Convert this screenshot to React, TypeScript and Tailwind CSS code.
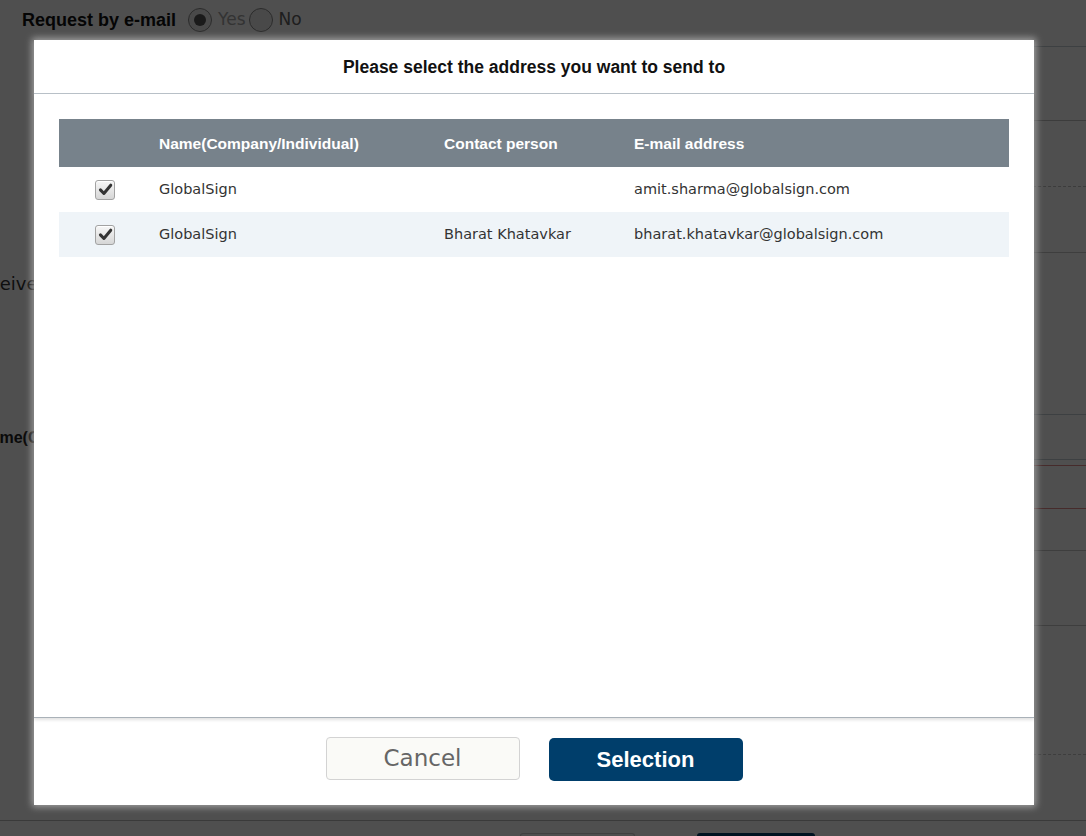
import React from 'react';

type Contact = {
  name: string;
  person: string;
  email: string;
};

const contacts: Contact[] = [
  { name: 'GlobalSign', person: '', email: 'amit.sharma@globalsign.com' },
  { name: 'GlobalSign', person: 'Bharat Khatavkar', email: 'bharat.khatavkar@globalsign.com' },
];

const CheckBox: React.FC = () => (
  <span className="flex h-[20px] w-[20px] items-center justify-center rounded-[3px] border border-[#a2a2a2] bg-gradient-to-b from-[#f7f7f7] to-[#d6d6d6] shadow-[inset_0_1px_0_#fff]">
    <svg viewBox="0 0 16 16" className="h-[15px] w-[15px]">
      <path d="M2.6 8.4 L6.3 12.3 L13.6 3.4" fill="none" stroke="#333" strokeWidth="3.2" strokeLinecap="round" strokeLinejoin="round" />
    </svg>
  </span>
);

const Radio: React.FC<{ checked?: boolean }> = ({ checked }) => (
  <span className="flex h-[24px] w-[24px] items-center justify-center rounded-full border border-[#8a8a8a] bg-[#ececec]">
    {checked && <span className="h-[12px] w-[12px] rounded-full bg-[#555]" />}
  </span>
);

const App: React.FC = () => {
  return (
    <div className="relative h-[836px] w-full overflow-hidden bg-white font-['DejaVu_Sans',sans-serif]">
      {/* page behind the dialog */}
      <div className="flex h-[40px] items-center pl-[22px]">
        <span className="font-['Liberation_Sans',sans-serif] text-[18px] font-bold text-[#111]">Request by e-mail</span>
        <div className="ml-[12px] flex items-center gap-[6px]">
          <Radio checked />
          <span className="text-[17px] text-[#a5a5a5]">Yes</span>
        </div>
        <div className="ml-[3px] flex items-center gap-[6px]">
          <Radio />
          <span className="text-[17px] text-[#636363]">No</span>
        </div>
      </div>

      <div className="flex h-[780px]">
        <div className="w-[300px] overflow-hidden">
          <div className="mt-[230px] -ml-[33px] whitespace-nowrap text-[18px] text-[#333]">Receive the certificate</div>
          <div className="mt-[129px] -ml-[21px] whitespace-nowrap font-['Liberation_Sans',sans-serif] text-[16px] font-bold text-[#222]">
            Name(Company/Individual)
          </div>
        </div>
        <div className="flex-1">
          <div className="h-[6px]" />
          <div className="h-[74px] border-t border-[#c4ced6]" />
          <div className="h-[66px] border-t border-[#c2c2c2]" />
          <div className="h-[66px] border-t border-dashed border-[#c2c2c2]" />
          <div className="h-[162px] border-t border-[#c8c8c8]" />
          <div className="h-[45px] border-t border-[#c4ced6]" />
          <div className="h-[6px] border-t border-[#c4ced6]" />
          <div className="h-[44px] border-y border-[#e08a8a]" />
          <div className="h-[41px]" />
          <div className="h-[75px] border-t border-[#c8c8c8]" />
          <div className="h-[129px] border-t border-[#c8c8c8]" />
          <div className="h-[66px] border-t border-dashed border-[#c8c8c8]" />
        </div>
      </div>

      <div className="flex h-[16px] items-end border-t border-[#bcbcbc]">
        <div className="ml-[520px] h-[3px] w-[115px] rounded-t-[4px] border border-b-0 border-[#cfcfcf] bg-[#fafafa]" />
        <div className="ml-[62px] h-[3px] w-[118px] rounded-t-[4px] bg-[#003e6b]" />
      </div>

      {/* dimming layer */}
      <div className="absolute inset-0 bg-[rgba(0,0,0,0.69)]" />

      {/* dialog */}
      <div className="absolute left-[34px] top-[40px] flex h-[765px] w-[1000px] flex-col bg-white shadow-[0_0_7px_2px_rgba(190,190,190,0.75)]">
        <div className="flex h-[54px] shrink-0 items-center justify-center border-b border-[#b9c1c8] pt-[1px] font-['Liberation_Sans',sans-serif] text-[17.5px] font-bold text-[#111]">
          Please select the address you want to send to
        </div>

        <div className="relative z-10 flex-1 border-b border-[#a9b1b8] bg-white px-[25px] pt-[25px] shadow-[0_2px_3px_rgba(0,0,0,0.12)]">
          <div className="grid h-[48px] grid-cols-[100px_285px_190px_1fr] items-center bg-[#77828b] pt-[1px] font-['Liberation_Sans',sans-serif] text-[15.5px] font-bold text-white">
            <div />
            <div>Name(Company/Individual)</div>
            <div>Contact person</div>
            <div>E-mail address</div>
          </div>
          {contacts.map((c, i) => (
            <div
              key={c.email}
              className={`grid h-[45px] grid-cols-[100px_285px_190px_1fr] items-center text-[14.5px] text-[#333] ${i % 2 === 1 ? 'bg-[#eff4f8]' : 'bg-white'}`}
            >
              <div className="pl-[36px]">
                <CheckBox />
              </div>
              <div>{c.name}</div>
              <div>{c.person}</div>
              <div>{c.email}</div>
            </div>
          ))}
        </div>

        <div className="flex h-[87px] shrink-0 items-start justify-center gap-[29px] pt-[19px]">
          <button className="h-[43px] w-[194px] rounded-[4px] border border-[#d3d3d3] bg-[#fafaf7] text-[23px] text-[#666]">
            Cancel
          </button>
          <button className="mt-[1px] h-[43px] w-[194px] rounded-[5px] bg-[#003e6b] font-['Liberation_Sans',sans-serif] text-[22px] font-bold text-white">
            Selection
          </button>
        </div>
      </div>
    </div>
  );
};

export default App;
